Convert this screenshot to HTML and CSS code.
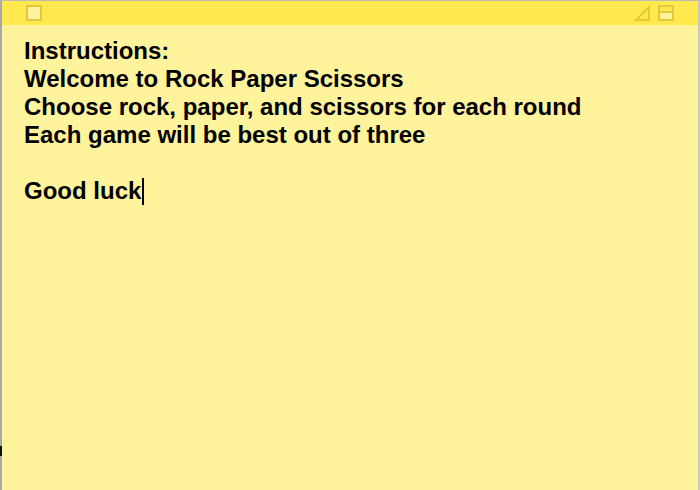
FILE: index.html
```html
<!DOCTYPE html>
<html>
<head>
<meta charset="utf-8">
<link rel="stylesheet" href="styles.css">
</head>
<body>
<div class="window">
  <div class="titlebar">
    <span class="close-box"></span>
    <div class="right-icons">
      <svg class="resize" width="16" height="16" viewBox="0 0 16 16"><path d="M2 15 L15 2 L15 15 Z" fill="none" stroke="#e3c93a" stroke-width="2" stroke-linejoin="miter"/></svg>
      <span class="collapse-box"><span class="collapse-line"></span></span>
    </div>
  </div>
  <div class="content">
    <div class="line">Instructions:</div>
    <div class="line">Welcome to Rock Paper Scissors</div>
    <div class="line">Choose rock, paper, and scissors for each round</div>
    <div class="line">Each game will be best out of three</div>
    <div class="line">&nbsp;</div>
    <div class="line">Good luck<span class="caret"></span></div>
  </div>
  <span class="edge-mark"></span>
</div>
</body>
</html>
```
FILE: styles.css
```css
html, body {
  margin: 0;
  padding: 0;
  width: 700px;
  height: 490px;
  overflow: hidden;
  background: #fff39c;
}
.window {
  position: relative;
  box-sizing: border-box;
  width: 700px;
  height: 490px;
  border-top: 1px solid #bdbdb5;
  border-left: 2px solid #a9a9a4;
  border-right: 2px solid #c8c8c6;
  background: #fff39c;
  display: flex;
  flex-direction: column;
}
.titlebar {
  height: 24px;
  background: #ffe94f;
  display: flex;
  align-items: center;
  justify-content: space-between;
  padding: 0 24px 0 24px;
}
.close-box {
  box-sizing: border-box;
  width: 16px;
  height: 16px;
  border: 2px solid #e3c93a;
  background: #fff39c;
  display: block;
}
.right-icons {
  display: flex;
  align-items: center;
  gap: 8px;
}
.resize {
  display: block;
}
.collapse-box {
  box-sizing: border-box;
  width: 16px;
  height: 16px;
  border: 2px solid #e3c93a;
  background: #fff39c;
  display: flex;
  flex-direction: column;
}
.collapse-line {
  height: 4px;
  border-bottom: 2px solid #e3c93a;
  background: #ffe94f;
}
.content {
  padding: 12px 22px 0 22px;
  font-family: "Liberation Sans", Arial, sans-serif;
  font-weight: bold;
  font-size: 24px;
  line-height: 28px;
  color: #000;
}
.line {
  white-space: pre;
}
.caret {
  display: inline-block;
  width: 2px;
  height: 27px;
  background: #000;
  vertical-align: -6px;
  margin-left: 1px;
}
.edge-mark {
  position: absolute;
  left: -2px;
  top: 445px;
  width: 2px;
  height: 10px;
  background: #111;
}
```
